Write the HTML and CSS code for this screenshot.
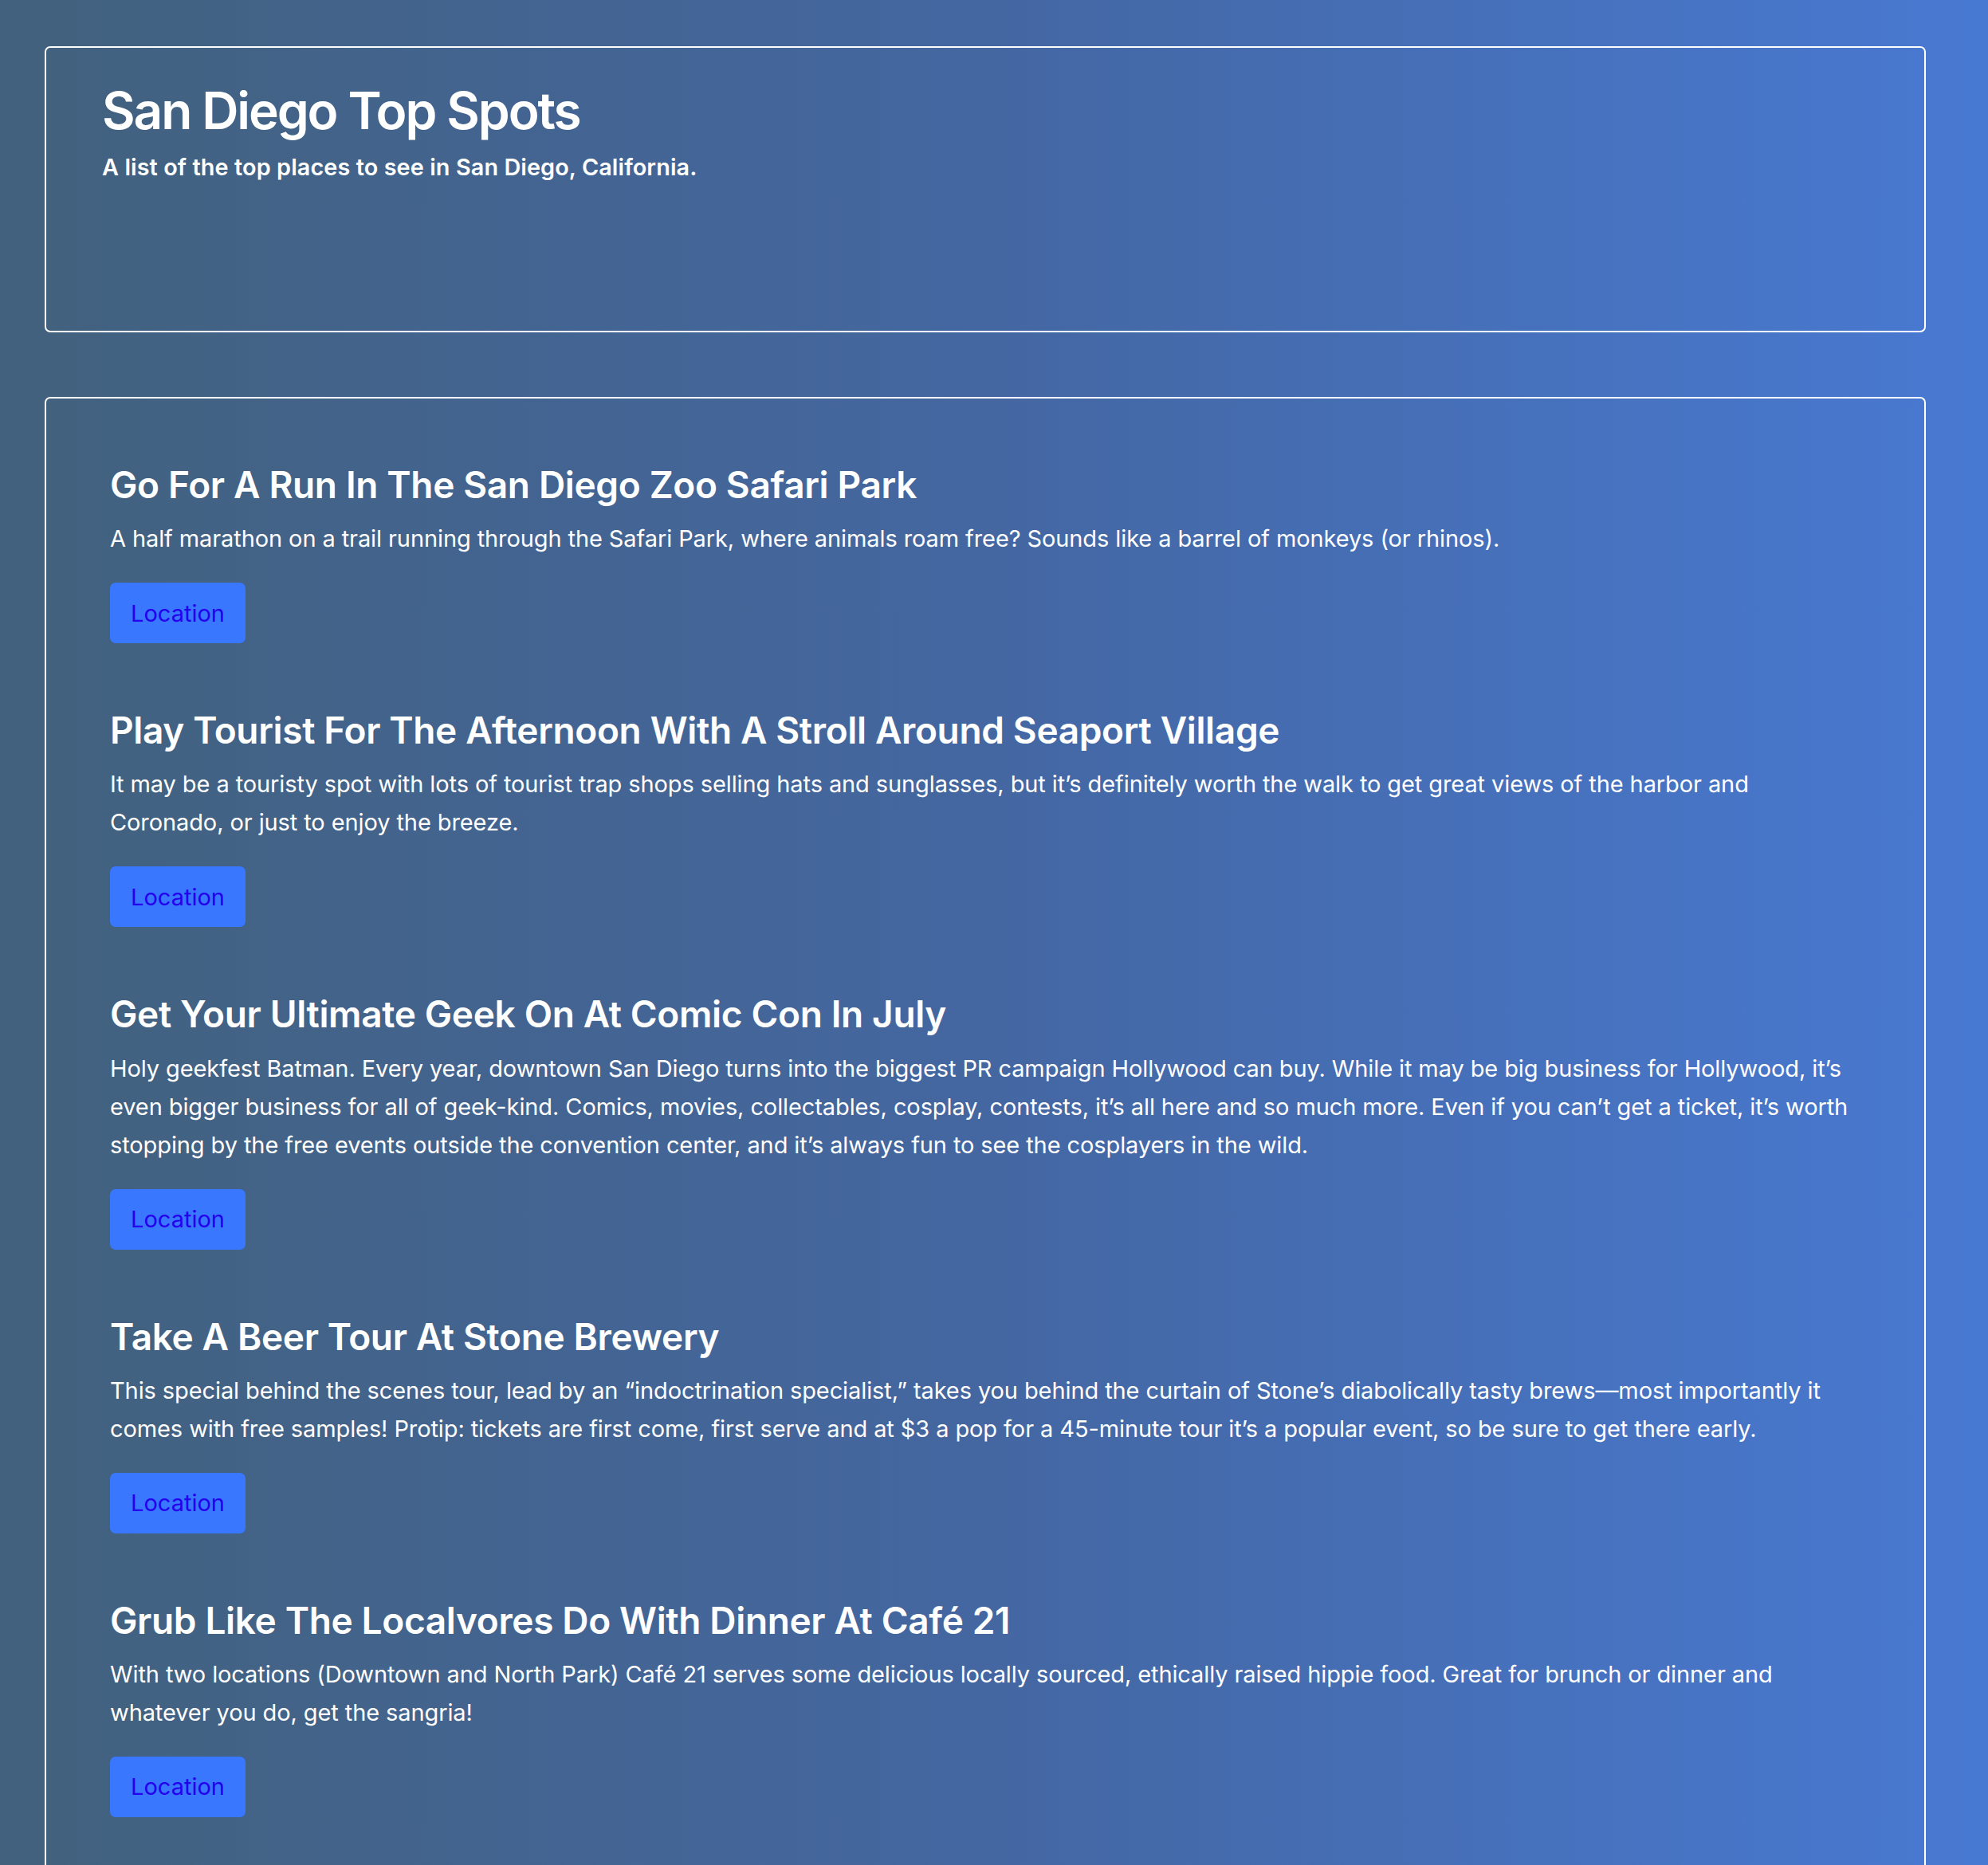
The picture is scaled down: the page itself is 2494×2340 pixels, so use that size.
FILE: index.html
```html
<!DOCTYPE html>
<html lang="en">
<head>
<meta charset="utf-8">
<title>San Diego Top Spots</title>
<link rel="stylesheet" href="styles.css">
</head>
<body>
<div class="page">
  <header class="hero">
    <h1 class="hero-title">San Diego Top Spots</h1>
    <p class="hero-sub">A list of the top places to see in San Diego, California.</p>
  </header>

  <main class="spots">
    <section class="spot">
      <h2 class="spot-title">Go For A Run In The San Diego Zoo Safari Park</h2>
      <p class="spot-text">A half marathon on a trail running through the Safari Park, where animals roam free? Sounds like a barrel of monkeys (or rhinos).</p>
      <button class="spot-btn" type="button"><a href="#">Location</a></button>
    </section>
    <section class="spot">
      <h2 class="spot-title">Play Tourist For The Afternoon With A Stroll Around Seaport Village</h2>
      <p class="spot-text">It may be a touristy spot with lots of tourist trap shops selling hats and sunglasses, but it’s definitely worth the walk to get great views of the harbor and Coronado, or just to enjoy the breeze.</p>
      <button class="spot-btn" type="button"><a href="#">Location</a></button>
    </section>
    <section class="spot">
      <h2 class="spot-title">Get Your Ultimate Geek On At Comic Con In July</h2>
      <p class="spot-text">Holy geekfest Batman. Every year, downtown San Diego turns into the biggest PR campaign Hollywood can buy. While it may be big business for Hollywood, it’s even bigger business for all of geek-kind. Comics, movies, collectables, cosplay, contests, it’s all here and so much more. Even if you can’t get a ticket, it’s worth stopping by the free events outside the convention center, and it’s always fun to see the cosplayers in the wild.</p>
      <button class="spot-btn" type="button"><a href="#">Location</a></button>
    </section>
    <section class="spot">
      <h2 class="spot-title">Take A Beer Tour At Stone Brewery</h2>
      <p class="spot-text">This special behind the scenes tour, lead by an “indoctrination specialist,” takes you behind the curtain of Stone’s diabolically tasty brews—most importantly it comes with free samples! Protip: tickets are first come, first serve and at $3 a pop for a 45-minute tour it’s a popular event, so be sure to get there early.</p>
      <button class="spot-btn" type="button"><a href="#">Location</a></button>
    </section>
    <section class="spot">
      <h2 class="spot-title">Grub Like The Localvores Do With Dinner At Café 21</h2>
      <p class="spot-text">With two locations (Downtown and North Park) Café 21 serves some delicious locally sourced, ethically raised hippie food. Great for brunch or dinner and whatever you do, get the sangria!</p>
      <button class="spot-btn" type="button"><a href="#">Location</a></button>
    </section>
  </main>
</div>
</body>
</html>
```

FILE: styles.css
```css
* { box-sizing: border-box; }

html, body {
  margin: 0;
  padding: 0;
}

body {
  font-family: Inter, "Noto Sans", "Liberation Sans", sans-serif;
  color: #ffffff;
  background: linear-gradient(to right, #42617d 0%, #4467a2 50%, #4879d2 100%);
  min-height: 2340px;
}

.page {
  padding: 58px 78px 0 56px;
}

.hero {
  border: 2px solid #ffffff;
  border-radius: 7px;
  height: 359px;
  padding: 41px 70px 0;
}

.hero-title {
  margin: 0;
  font-size: 64px;
  font-weight: 600;
  line-height: 1.2;
  letter-spacing: -0.033em;
}

.hero-sub {
  margin: 15px 0 0;
  font-size: 28.8px;
  font-weight: 600;
  line-height: 1.2;
  letter-spacing: 0.1px;
}

.spots {
  margin-top: 81px;
  border: 2px solid #ffffff;
  border-bottom: none;
  border-radius: 7px 7px 0 0;
  padding: 81px 77px 0 80px;
  min-height: 1842px;
}

.spot + .spot {
  margin-top: 82px;
}

.spot-title {
  margin: 0;
  font-size: 46px;
  font-weight: 600;
  line-height: 1.2;
  letter-spacing: -0.35px;
}

.spot-text {
  margin: 16px 0 0;
  font-size: 29px;
  font-weight: 400;
  line-height: 48px;
  letter-spacing: -0.1px;
}

.spot-btn {
  display: block;
  margin-top: 31px;
  height: 76px;
  padding: 0 26px;
  border: none;
  border-radius: 7px;
  background: #3877fe;
  font-family: inherit;
  font-size: 29px;
  line-height: 1;
  cursor: pointer;
}

.spot-btn a {
  color: #2400ee;
  text-decoration: none;
}
```
